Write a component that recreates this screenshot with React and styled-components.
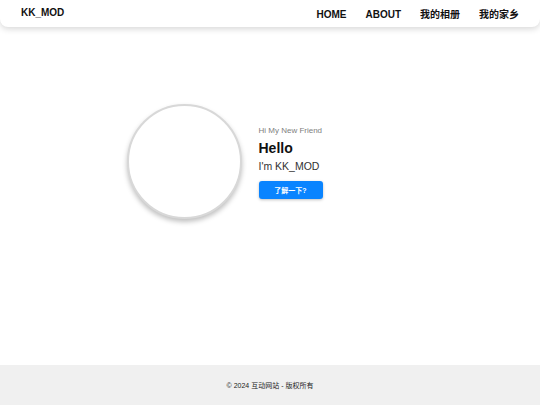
import React from 'react'
import styled, { createGlobalStyle } from 'styled-components'

const GlobalStyle = createGlobalStyle`
    html, body {
        margin: 0;
        padding: 0;
        background: #ffffff;
        font-family: "Liberation Sans", Arial, "Noto Sans CJK SC", sans-serif;
    }
    * {
        box-sizing: border-box;
    }
`

const Page = styled.div`
    display: flex;
    flex-direction: column;
    min-height: 405px;
`

const Header = styled.header`
    height: 27px;
    display: flex;
    align-items: center;
    justify-content: space-between;
    padding: 0 21px 0 21px;
    background: #ffffff;
    border-radius: 0 0 8px 8px;
    box-shadow: 0 2px 6px rgba(0, 0, 0, 0.16);
`

const Logo = styled.div`
    font-size: 10px;
    line-height: 12px;
    font-weight: bold;
    color: #111;
    margin-top: -1px;
`

const Nav = styled.nav`
    display: flex;
    align-items: center;
    gap: 19px;
    margin-top: 2px;
`

const NavLink = styled.a`
    display: block;
    font-size: 10px;
    line-height: 12px;
    font-weight: bold;
    color: #111;
    text-decoration: none;
`

const Main = styled.main`
    flex: 1;
    display: flex;
    justify-content: center;
    align-items: flex-start;
    gap: 17px;
    padding-top: 77px;
`

const Avatar = styled.div`
    width: 115px;
    height: 115px;
    border-radius: 50%;
    border: 2px solid #d8d8d8;
    background: #ffffff;
    box-shadow: 0 3px 5px rgba(0, 0, 0, 0.25);
`

const Intro = styled.div`
    width: 155px;
    display: flex;
    flex-direction: column;
    padding-top: 22px;
`

const Greeting = styled.div`
    font-size: 8px;
    line-height: 10px;
    color: #808080;
`

const Title = styled.h1`
    margin: 3px 0 0 0;
    font-size: 14px;
    line-height: 18px;
    font-weight: bold;
    color: #111;
`

const Subtitle = styled.div`
    margin-top: 2px;
    font-size: 10.5px;
    line-height: 14px;
    color: #333;
`

const Button = styled.button`
    margin-top: 8px;
    width: 64px;
    height: 18px;
    border: none;
    border-radius: 3px;
    background: #0a84ff;
    color: #ffffff;
    font-family: inherit;
    font-size: 7px;
    font-weight: bold;
    box-shadow: 0 1px 3px rgba(0, 0, 0, 0.25);
    padding: 0;
`

const Footer = styled.footer`
    height: 40px;
    display: flex;
    align-items: center;
    justify-content: center;
    background: #f0f0f0;
    font-size: 7px;
    color: #222;
`

const App = () => {
    return (
        <Page>
            <GlobalStyle />
            <Header>
                <Logo>KK_MOD</Logo>
                <Nav>
                    <NavLink href='#'>HOME</NavLink>
                    <NavLink href='#'>ABOUT</NavLink>
                    <NavLink href='#'>我的相册</NavLink>
                    <NavLink href='#'>我的家乡</NavLink>
                </Nav>
            </Header>
            <Main>
                <Avatar />
                <Intro>
                    <Greeting>Hi My New Friend</Greeting>
                    <Title>Hello</Title>
                    <Subtitle>I'm KK_MOD</Subtitle>
                    <div>
                        <Button>了解一下?</Button>
                    </div>
                </Intro>
            </Main>
            <Footer>© 2024 互动网站 - 版权所有</Footer>
        </Page>
    )
}

export default App
